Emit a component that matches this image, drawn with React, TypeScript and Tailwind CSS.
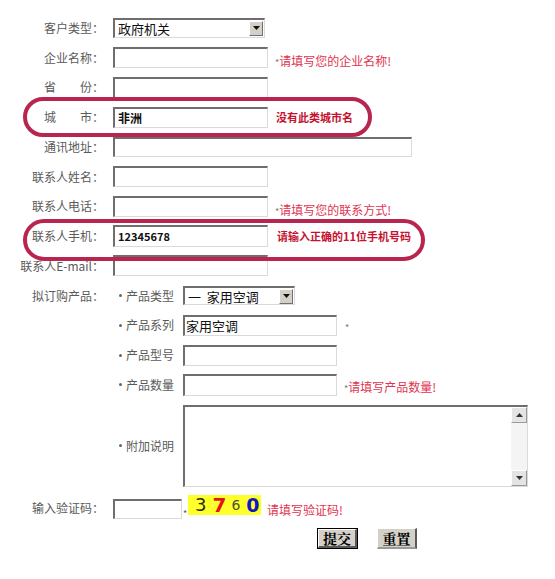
import React from "react";

const lbl = "w-[104px] shrink-0 text-right text-[#5a5a5a] text-[12px] whitespace-nowrap";
const inset =
  "border-t-2 border-l-2 border-r border-b border-t-[#6e6e6e] border-l-[#6e6e6e] border-r-[#dadada] border-b-[#dadada] bg-white";
const row = "flex items-center h-[29.75px]";
const pinkErr = "text-[12px] text-[#e2334f] whitespace-nowrap";
const boldErr = "text-[11px] font-bold text-[#c4122f] whitespace-nowrap";

function Arrow() {
  return (
    <div className="w-[14px] h-[15px] mr-[1px] bg-[#d4d0c8] border-t border-l border-t-white border-l-white border-r border-b border-r-[#707070] border-b-[#707070] flex items-center justify-center">
      <svg width="7" height="4" viewBox="0 0 7 4">
        <polygon points="0,0 7,0 3.5,4" fill="#111" />
      </svg>
    </div>
  );
}

function SubLabel({ text }: { text: string }) {
  return (
    <div className="w-[79px] shrink-0 flex items-center pl-[15px] text-[12px] text-[#5a5a5a] whitespace-nowrap">
      <div className="w-[3px] h-[3px] rounded-full bg-[#666] mr-[4px] shrink-0" />
      <span>{text}</span>
    </div>
  );
}

function Scroll() {
  return (
    <div className="w-[16px] h-full flex flex-col justify-between bg-[#f4f4f4]">
      <div className="h-[16px] bg-[#e4e4e4] border-t border-l border-t-white border-l-white border-r border-b border-r-[#9a9a9a] border-b-[#9a9a9a] flex items-center justify-center">
        <svg width="7" height="4" viewBox="0 0 7 4">
          <polygon points="0,4 7,4 3.5,0" fill="#333" />
        </svg>
      </div>
      <div className="h-[16px] bg-[#e4e4e4] border-t border-l border-t-white border-l-white border-r border-b border-r-[#9a9a9a] border-b-[#9a9a9a] flex items-center justify-center">
        <svg width="7" height="4" viewBox="0 0 7 4">
          <polygon points="0,0 7,0 3.5,4" fill="#333" />
        </svg>
      </div>
    </div>
  );
}

export default function App() {
  return (
    <div className="relative w-[555px] h-[579px] bg-white overflow-hidden font-['Noto_Sans_CJK_SC','Noto_Sans',sans-serif]">
      <div className="pt-[13px] flex flex-col">
        {/* 客户类型 */}
        <div className={row}>
          <div className={lbl}>客户类型：</div>
          <div className={`ml-[9px] w-[152px] h-[20px] ${inset} flex items-center justify-between`}>
            <span className="pl-[3px] text-[13px] text-[#111] leading-none">政府机关</span>
            <Arrow />
          </div>
        </div>
        {/* 企业名称 */}
        <div className={row}>
          <div className={lbl}>企业名称：</div>
          <div className={`ml-[9px] w-[155px] h-[21px] ${inset}`} />
          <div className={`ml-[7px] mt-[7px] ${pinkErr}`}>
            <span className="text-[#777] text-[9px]">*</span>请填写您的企业名称!
          </div>
        </div>
        {/* 省份 */}
        <div className={row}>
          <div className={lbl}>省{"\u3000\u3000"}份：</div>
          <div className={`ml-[9px] w-[155px] h-[21px] ${inset}`} />
        </div>
        {/* 城市 */}
        <div className={row}>
          <div className={lbl}>城{"\u3000\u3000"}市：</div>
          <div className={`ml-[9px] w-[155px] h-[21px] ${inset} flex items-center`}>
            <span className="pl-[3px] text-[12px] font-bold text-[#111] leading-none">非洲</span>
          </div>
          <div className={`ml-[8px] ${boldErr}`}>没有此类城市名</div>
        </div>
        {/* 通讯地址 */}
        <div className={row}>
          <div className={lbl}>通讯地址：</div>
          <div className={`ml-[9px] w-[299px] h-[20px] ${inset}`} />
        </div>
        {/* 联系人姓名 */}
        <div className={row}>
          <div className={lbl}>联系人姓名：</div>
          <div className={`ml-[9px] w-[155px] h-[21px] ${inset}`} />
        </div>
        {/* 联系人电话 */}
        <div className={row}>
          <div className={lbl}>联系人电话：</div>
          <div className={`ml-[9px] w-[155px] h-[21px] ${inset}`} />
          <div className={`ml-[7px] mt-[7px] ${pinkErr}`}>
            <span className="text-[#777] text-[9px]">*</span>请填写您的联系方式!
          </div>
        </div>
        {/* 联系人手机 */}
        <div className={row}>
          <div className={lbl}>联系人手机：</div>
          <div className={`ml-[9px] w-[155px] h-[22px] ${inset} flex items-center`}>
            <span className="pl-[3px] text-[11px] font-bold text-[#111] leading-none">12345678</span>
          </div>
          <div className={`ml-[9px] ${boldErr}`}>请输入正确的11位手机号码</div>
        </div>
        {/* 联系人E-mail */}
        <div className={row}>
          <div className={lbl}>联系人E-mail：</div>
          <div className={`ml-[9px] w-[155px] h-[21px] ${inset}`} />
        </div>
        {/* 拟订购产品 */}
        <div className={row}>
          <div className={lbl}>拟订购产品：</div>
          <SubLabel text="产品类型" />
          <div className={`w-[112px] h-[19px] ${inset} flex items-center justify-between`}>
            <span className="pl-[3px] text-[13px] text-[#111] leading-none whitespace-pre">一  家用空调</span>
            <Arrow />
          </div>
        </div>
        <div className={row}>
          <div className={lbl}></div>
          <SubLabel text="产品系列" />
          <div className={`w-[154px] h-[21px] ${inset} flex items-center`}>
            <span className="pl-[1px] text-[13px] text-[#111] leading-none">家用空调</span>
          </div>
          <div className="ml-[8px] mt-[4px] text-[9px] text-[#777]">*</div>
        </div>
        <div className={row}>
          <div className={lbl}></div>
          <SubLabel text="产品型号" />
          <div className={`w-[154px] h-[21px] ${inset}`} />
        </div>
        <div className={row}>
          <div className={lbl}></div>
          <SubLabel text="产品数量" />
          <div className={`w-[154px] h-[22px] ${inset}`} />
          <div className={`ml-[7px] mt-[4px] ${pinkErr}`}>
            <span className="text-[#777] text-[9px]">*</span>请填写产品数量!
          </div>
        </div>
        {/* 附加说明 */}
        <div className="flex items-center mt-[5px]">
          <div className={lbl}></div>
          <SubLabel text="附加说明" />
          <div className={`w-[345px] h-[82px] ${inset} flex justify-end`}>
            <Scroll />
          </div>
        </div>
        {/* 验证码 */}
        <div className="flex items-center h-[28px] mt-[7px]">
          <div className={lbl}>输入验证码：</div>
          <div className={`ml-[9px] w-[69px] h-[20px] ${inset} mt-[3px]`} />
          <div className="self-end mb-[1px] text-[9px] text-[#555] w-[6px] text-center">*</div>
          <div className="w-[73px] h-[20px] bg-[#ffff2a] -mt-[5px] flex items-center pl-[7px] font-['DejaVu_Sans',sans-serif] leading-none">
            <span className="text-[18px] text-[#2a2a10]">3</span>
            <span className="ml-[6px] text-[20px] text-[#e4141c] font-bold">7</span>
            <span className="ml-[5px] text-[14px] text-[#505030]">6</span>
            <span className="ml-[6px] text-[19px] text-[#1414c8] font-bold">0</span>
          </div>
          <div className={`ml-[6px] mt-[5px] ${pinkErr}`}>请填写验证码!</div>
        </div>
        {/* 按钮 */}
        <div className="flex mt-[6px]">
          <div className="ml-[317px] w-[41px] h-[21px] border border-black bg-[#d4d0c8] flex">
            <div className="flex-1 border-t border-l border-t-white border-l-white border-r-2 border-b-2 border-r-[#5a5a5a] border-b-[#5a5a5a] flex items-center justify-center text-[14px] font-bold text-black font-['Noto_Serif_CJK_SC','Noto_Sans_CJK_SC',serif] leading-none">
              提交
            </div>
          </div>
          <div className="ml-[19px] w-[40px] h-[21px] bg-[#d4d0c8] border-t border-l border-t-white border-l-white border-r-2 border-b-2 border-r-[#5a5a5a] border-b-[#9a9a9a] flex items-center justify-center text-[14px] font-bold text-black font-['Noto_Serif_CJK_SC','Noto_Sans_CJK_SC',serif] leading-none">
            重置
          </div>
        </div>
      </div>

      {/* red highlight ovals */}
      <div className="absolute left-[23px] top-[97px] w-[349px] h-[40px] border-[4px] border-[#b8264f] rounded-[20px]" />
      <div className="absolute left-[23px] top-[219px] w-[402px] h-[42px] border-[4px] border-[#b8264f] rounded-[21px]" />
    </div>
  );
}
